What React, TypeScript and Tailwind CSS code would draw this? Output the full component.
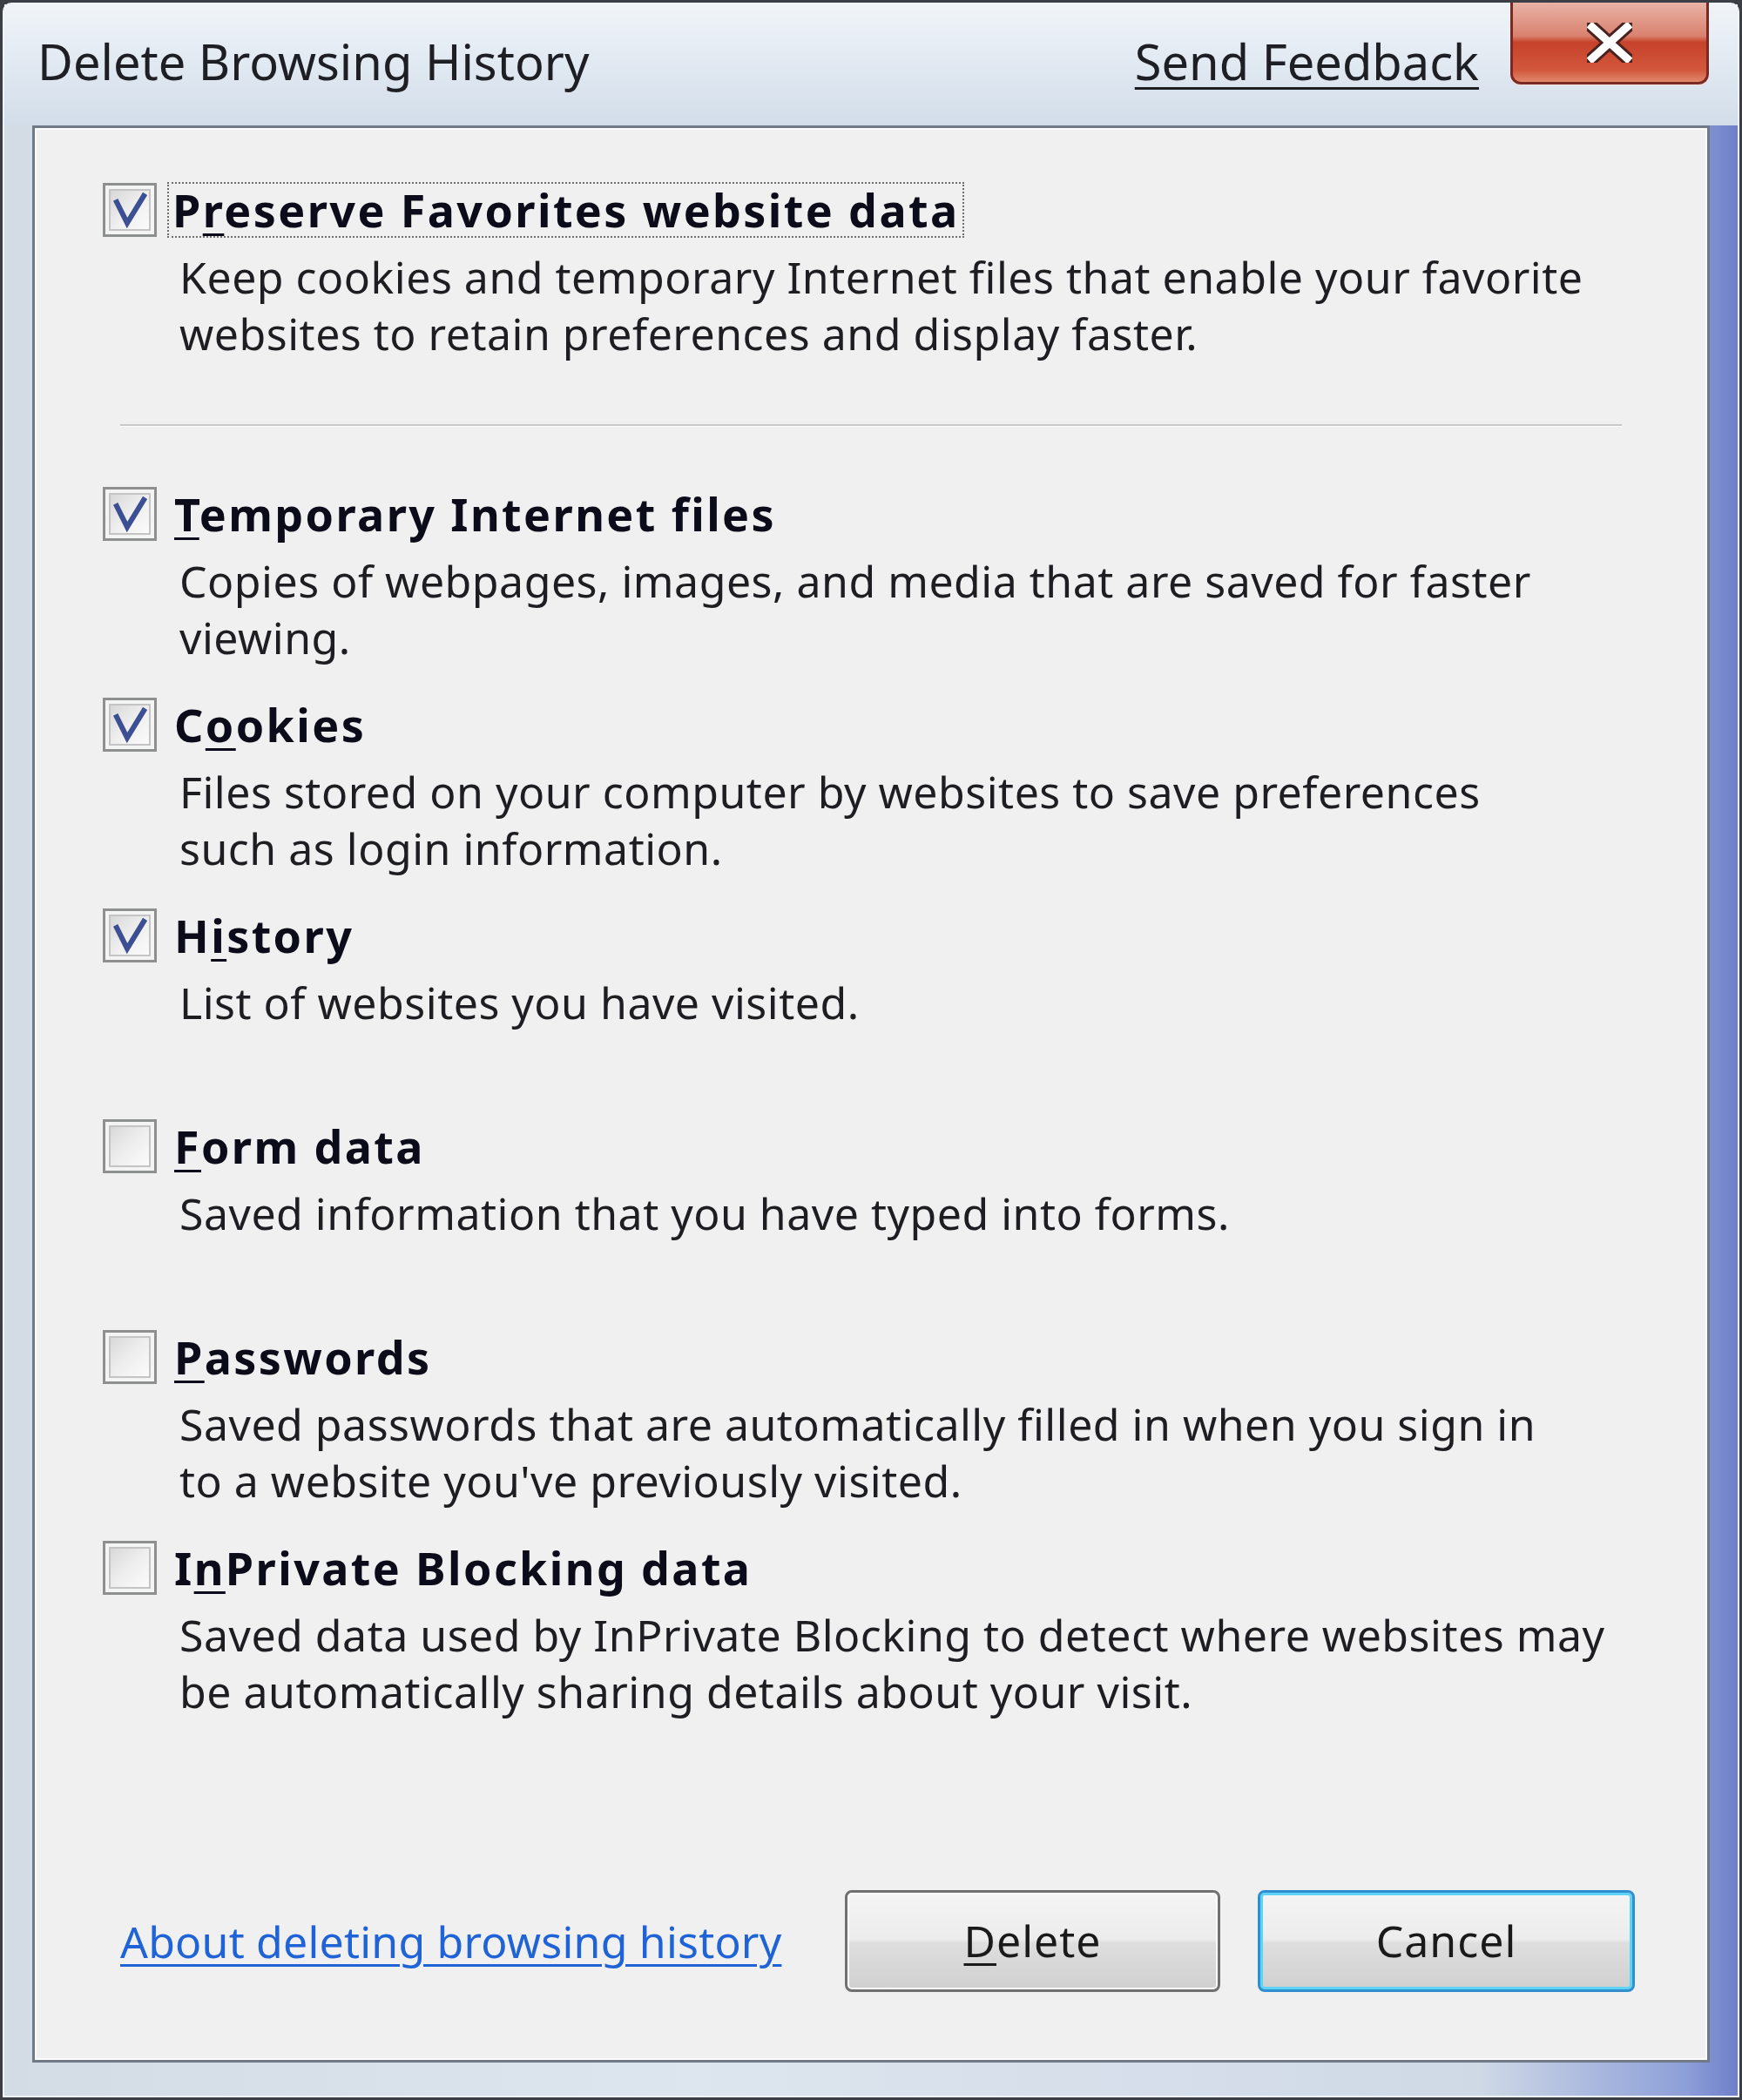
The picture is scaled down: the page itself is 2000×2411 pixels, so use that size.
import React from "react";

const font = "font-['Noto_Sans','DejaVu_Sans',sans-serif]";

function CheckBox({ checked }: { checked: boolean }) {
  return (
    <div className="w-[62px] h-[62px] shrink-0 border-[3px] border-[#8e8f8f] bg-[#f4f4f4] p-[4px] box-border">
      <div className="w-full h-full border-[2px] border-[#c4c4c4] bg-[linear-gradient(135deg,#d8d8d8_0%,#eeeeee_50%,#fbfbfb_100%)] relative">
        {checked && (
          <svg viewBox="0 0 44 44" className="absolute inset-0 w-full h-full">
            <path d="M7 13 L19 37 L38 6" fill="none" stroke="#3d4f93" strokeWidth="6" strokeLinejoin="miter" strokeLinecap="square" />
          </svg>
        )}
      </div>
    </div>
  );
}

type Item = {
  label: React.ReactNode;
  lines: string[];
  checked: boolean;
  focus?: boolean;
};

function U({ children }: { children: React.ReactNode }) {
  return <span className="underline underline-offset-[7px] decoration-[3px]">{children}</span>;
}

function Option({ item }: { item: Item }) {
  return (
    <div className="h-[206px] flex flex-col">
      <div className="h-[64px] flex items-center pl-[78px]">
        <CheckBox checked={item.checked} />
        <div
          className={
            "ml-[12px] text-[52px] leading-[60px] font-bold text-[#0b0b1a] tracking-[2.4px] " +
            (item.focus ? "border-[2px] border-dotted border-[#6e6e6e] px-[4px]" : "px-[6px] border-[2px] border-transparent")
          }
        >
          {item.label}
        </div>
      </div>
      <div className="mt-[13px] pl-[166px] text-[50px] leading-[64.5px] text-[#1e1e22] tracking-[0.5px]">
        {item.lines.map((l, i) => (
          <div key={i} className="whitespace-nowrap">{l}</div>
        ))}
      </div>
    </div>
  );
}

export default function App() {
  const items: Item[] = [
    {
      label: (
        <>
          <U>T</U>emporary Internet files
        </>
      ),
      lines: ["Copies of webpages, images, and media that are saved for faster", "viewing."],
      checked: true,
    },
    {
      label: (
        <>
          C<U>o</U>okies
        </>
      ),
      lines: ["Files stored on your computer by websites to save preferences", "such as login information."],
      checked: true,
    },
    {
      label: (
        <>
          H<U>i</U>story
        </>
      ),
      lines: ["List of websites you have visited."],
      checked: true,
    },
    {
      label: (
        <>
          <U>F</U>orm data
        </>
      ),
      lines: ["Saved information that you have typed into forms."],
      checked: false,
    },
    {
      label: (
        <>
          <U>P</U>asswords
        </>
      ),
      lines: ["Saved passwords that are automatically filled in when you sign in", "to a website you've previously visited."],
      checked: false,
    },
    {
      label: (
        <>
          I<U>n</U>Private Blocking data
        </>
      ),
      lines: ["Saved data used by InPrivate Blocking to detect where websites may", "be automatically sharing details about your visit."],
      checked: false,
    },
  ];

  return (
    <div className={"w-[2000px] h-[2411px] overflow-hidden bg-[#3b3f45] p-[3px] box-border " + font}>
      <div className="w-full h-full relative flex flex-col bg-[linear-gradient(90deg,#d3dbe4_0%,#dde5ee_40%,#cfd9e6_85%,#8d9fd8_97%,#6f7fc9_100%)] rounded-t-[10px] border-[2px] border-[#eef3f8]">
        {/* title bar */}
        <div className="h-[139px] flex items-start shrink-0 bg-[linear-gradient(180deg,#f0f4f8_0%,#e4ebf3_40%,#d2dde9_100%)] relative">
          <div className="ml-[38px] mt-[30px] text-[56px] leading-[70px] text-[#1d1f24]">Delete Browsing History</div>
          <div className="ml-auto mr-[297px] mt-[30px] text-[56px] leading-[70px] text-[#1d1f24] underline underline-offset-[8px] decoration-[3px]">
            Send Feedback
          </div>
          {/* close button */}
          <div className="absolute right-[33px] top-[-2px] w-[228px] h-[94px] rounded-b-[12px] border-[3px] border-t-0 border-[#7a2a22] bg-[linear-gradient(180deg,#e9b2a6_0%,#d9826f_42%,#c7422a_50%,#d2573c_85%,#e0886b_100%)] flex items-center justify-center shadow-[0_1px_0_#f6e1dc]">
            <svg viewBox="0 0 52 46" className="w-[52px] h-[46px]">
              <path d="M6 5 L46 41 M46 5 L6 41" stroke="#4a2320" strokeWidth="15" strokeLinecap="square" />
              <path d="M6 5 L46 41 M46 5 L6 41" stroke="#ffffff" strokeWidth="9" strokeLinecap="square" />
            </svg>
          </div>
        </div>

        {/* content panel */}
        <div className="mx-[32px] flex-1 mb-[38px] flex flex-col border-[3px] border-[#707a86] bg-[#f0f0f0] shadow-[inset_0_0_0_2px_#fbfbfb]">
          <div className="pt-[62px]">
            <Option
              item={{
                label: (
                  <>
                    P<U>r</U>eserve Favorites website data
                  </>
                ),
                lines: [
                  "Keep cookies and temporary Internet files that enable your favorite",
                  "websites to retain preferences and display faster.",
                ],
                checked: true,
                focus: true,
              }}
            />
          </div>
          <div className="mt-[72px] mx-[98px] h-[2px] bg-[#c9c9c9] border-b border-white box-content" />
          <div className="mt-[68px] flex flex-col gap-[36px]">
            {items.map((it, i) => (
              <Option key={i} item={it} />
            ))}
          </div>

          {/* footer */}
          <div className="mt-auto mb-[78px] flex items-center pl-[98px] pr-[83px]">
            <a className="text-[50px] leading-[60px] text-[#1f63d6] underline underline-offset-[7px] decoration-[3px] tracking-[0.2px]">
              About deleting browsing history
            </a>
            <div className="ml-auto flex gap-[43px]">
              <button className="w-[431px] h-[117px] rounded-[8px] border-[3px] border-[#707070] bg-[linear-gradient(180deg,#f4f4f4_0%,#ececec_48%,#dedede_52%,#d0d0d0_100%)] shadow-[inset_0_0_0_2px_#fcfcfc] text-[50px] text-[#1a1a1a] tracking-[1px]">
                <U>D</U>elete
              </button>
              <button className="w-[433px] h-[117px] rounded-[8px] border-[3px] border-[#2f8fd0] bg-[linear-gradient(180deg,#f4f4f4_0%,#ececec_48%,#dedede_52%,#d0d0d0_100%)] shadow-[inset_0_0_0_3px_#5ed3f6] text-[50px] text-[#1a1a1a] tracking-[1px]">
                Cancel
              </button>
            </div>
          </div>
        </div>
      </div>
    </div>
  );
}
